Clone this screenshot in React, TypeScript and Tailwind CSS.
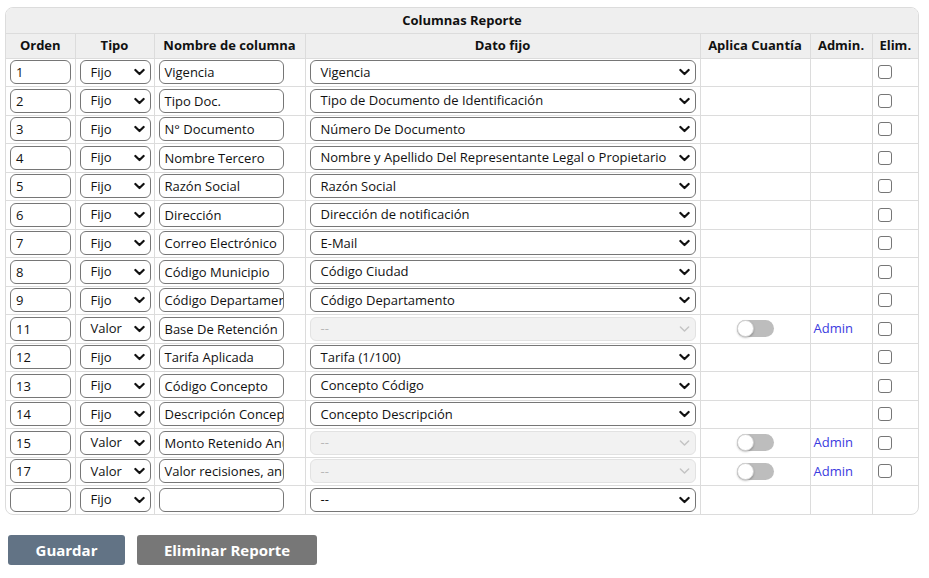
import React from 'react';

type Row = {
  orden: string;
  tipo: 'Fijo' | 'Valor';
  nombre: string;
  dato: string;
};

const ROWS: Row[] = [
  { orden: '1', tipo: 'Fijo', nombre: 'Vigencia', dato: 'Vigencia' },
  { orden: '2', tipo: 'Fijo', nombre: 'Tipo Doc.', dato: 'Tipo de Documento de Identificación' },
  { orden: '3', tipo: 'Fijo', nombre: 'N° Documento', dato: 'Número De Documento' },
  { orden: '4', tipo: 'Fijo', nombre: 'Nombre Tercero', dato: 'Nombre y Apellido Del Representante Legal o Propietario' },
  { orden: '5', tipo: 'Fijo', nombre: 'Razón Social', dato: 'Razón Social' },
  { orden: '6', tipo: 'Fijo', nombre: 'Dirección', dato: 'Dirección de notificación' },
  { orden: '7', tipo: 'Fijo', nombre: 'Correo Electrónico', dato: 'E-Mail' },
  { orden: '8', tipo: 'Fijo', nombre: 'Código Municipio', dato: 'Código Ciudad' },
  { orden: '9', tipo: 'Fijo', nombre: 'Código Departamento', dato: 'Código Departamento' },
  { orden: '11', tipo: 'Valor', nombre: 'Base De Retención', dato: '--' },
  { orden: '12', tipo: 'Fijo', nombre: 'Tarifa Aplicada', dato: 'Tarifa (1/100)' },
  { orden: '13', tipo: 'Fijo', nombre: 'Código Concepto', dato: 'Concepto Código' },
  { orden: '14', tipo: 'Fijo', nombre: 'Descripción Concepto', dato: 'Concepto Descripción' },
  { orden: '15', tipo: 'Valor', nombre: 'Monto Retenido Anual', dato: '--' },
  { orden: '17', tipo: 'Valor', nombre: 'Valor recisiones, anuales', dato: '--' },
];

function Chevron({ disabled }: { disabled?: boolean }) {
  return (
    <svg
      viewBox="0 0 12 8"
      className="pointer-events-none absolute right-[6px] top-1/2 h-[8px] w-[11px] -translate-y-1/2"
      fill="none"
      stroke={disabled ? '#c4c4c4' : '#111'}
      strokeWidth={disabled ? 1.6 : 2.4}
      strokeLinecap="round"
      strokeLinejoin="round"
    >
      <path d="M1.5 1.8 6 6.2l4.5-4.4" />
    </svg>
  );
}

function Select({ value, disabled, className }: { value: string; disabled?: boolean; className?: string }) {
  return (
    <div className={`relative ${className ?? ''}`}>
      <div
        className={`flex h-[24px] items-center overflow-hidden whitespace-nowrap rounded-[6px] border pl-[10px] pr-[24px] text-[13px] ${
          disabled
            ? 'border-[#e2e2e2] bg-[#f2f2f2] text-[#b8b8b8]'
            : 'border-[#767676] bg-white text-[#111]'
        }`}
      >
        {value}
      </div>
      <Chevron disabled={disabled} />
    </div>
  );
}

// text is clipped by the box, as in the real inputs
function TextBox({ value, className }: { value: string; className?: string }) {
  return (
    <div
      className={`h-[24px] overflow-hidden whitespace-nowrap rounded-[6px] border border-[#767676] bg-white px-[5px] text-[13px] leading-[22px] text-[#111] ${className ?? ''}`}
    >
      {value}
    </div>
  );
}

function Toggle() {
  return (
    <div className="mx-auto flex h-[17px] w-[37px] items-center rounded-full bg-[#bdbdbd]">
      <div className="h-[17px] w-[17px] rounded-full border border-[#d0d0d0] bg-white shadow-[0_1px_2px_rgba(0,0,0,0.25)]" />
    </div>
  );
}

function Check() {
  return <div className="h-[14px] w-[14px] rounded-[3px] border border-[#767676] bg-white" />;
}

function DataRow({ row, last }: { row: Row; last?: boolean }) {
  const valor = row.tipo === 'Valor';
  return (
    <tr className={`h-[28.5px] ${last ? '' : 'border-b border-[#dcdcdc]'}`}>
      <td className="border-r border-[#dcdcdc] pl-[4px]">
        <TextBox value={row.orden} className="w-[61px]" />
      </td>
      <td className="border-r border-[#dcdcdc] pl-[4px]">
        <div className="relative w-[71px]">
          <div className="flex h-[24px] items-center rounded-[6px] border border-[#767676] bg-white pl-[10px] text-[13px] text-[#111]">
            {row.tipo}
          </div>
          <Chevron />
        </div>
      </td>
      <td className="border-r border-[#dcdcdc] pl-[4px]">
        <TextBox value={row.nombre} className="w-[125px]" />
      </td>
      <td className="border-r border-[#dcdcdc] pl-[4px]">
        <Select value={row.dato} disabled={valor} className="w-[386px]" />
      </td>
      <td className="border-r border-[#dcdcdc]">{valor && <Toggle />}</td>
      <td className="border-r border-[#dcdcdc] pl-[3px] text-[13px] text-[#3a3ae0]">{valor && 'Admin'}</td>
      <td className="pl-[5px]">{!last && <Check />}</td>
    </tr>
  );
}

export default function App() {
  return (
    <div className="min-h-[578px] bg-white pl-[5px] pt-[7px] font-['Open_Sans',sans-serif] text-[#111]">
      <div className="w-[914px] overflow-hidden rounded-[8px] border border-[#dcdcdc]">
        <table className="w-full table-fixed border-collapse">
          <colgroup>
            <col className="w-[69px]" />
            <col className="w-[79px]" />
            <col className="w-[151px]" />
            <col className="w-[395px]" />
            <col className="w-[110px]" />
            <col className="w-[62px]" />
            <col />
          </colgroup>
          <thead>
            <tr className="h-[25px] border-b border-[#dcdcdc] bg-[#efefef]">
              <th colSpan={7} className="text-center text-[13px] font-bold">
                Columnas Reporte
              </th>
            </tr>
            <tr className="h-[25px] border-b border-[#dcdcdc] bg-[#efefef] text-[13px] font-bold">
              <th className="border-r border-[#dcdcdc] text-center">Orden</th>
              <th className="border-r border-[#dcdcdc] text-center">Tipo</th>
              <th className="whitespace-nowrap border-r border-[#dcdcdc] text-center">Nombre de columna</th>
              <th className="border-r border-[#dcdcdc] text-center">Dato fijo</th>
              <th className="whitespace-nowrap border-r border-[#dcdcdc] text-center">Aplica Cuantía</th>
              <th className="border-r border-[#dcdcdc] text-center">Admin.</th>
              <th className="text-center">Elim.</th>
            </tr>
          </thead>
          <tbody>
            {ROWS.map((r, i) => (
              <DataRow key={i} row={r} />
            ))}
            <DataRow row={{ orden: '', tipo: 'Fijo', nombre: '', dato: '--' }} last />
          </tbody>
        </table>
      </div>

      <div className="mt-[20px] flex gap-[12px] pl-[3px]">
        <button className="h-[30px] w-[117px] rounded-[3px] bg-[#627385] text-[15px] font-bold text-white">
          Guardar
        </button>
        <button className="h-[30px] w-[180px] rounded-[3px] bg-[#777777] text-[15px] font-bold text-white">
          Eliminar Reporte
        </button>
      </div>
    </div>
  );
}
